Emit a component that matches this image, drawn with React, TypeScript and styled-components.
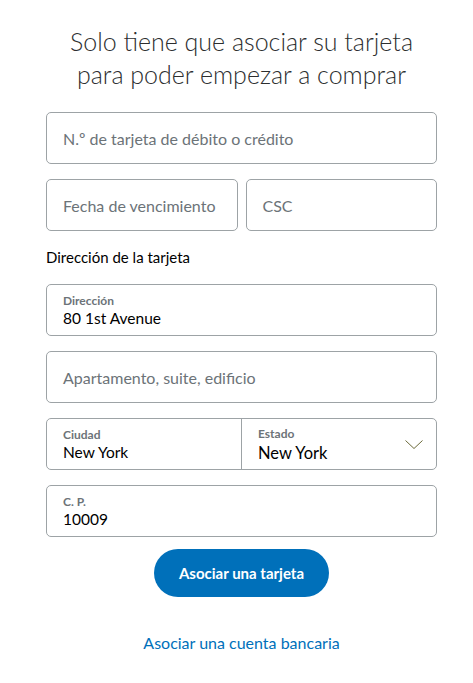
import React from "react";
import styled, { createGlobalStyle } from "styled-components";

const Global = createGlobalStyle`
  html, body { margin: 0; padding: 0; background: #fff; }
  body { font-family: Lato, "Open Sans", sans-serif; color: #2c2e2f; }
  * { box-sizing: border-box; }
`;

const Page = styled.div`
  width: 473px;
  padding: 25px 36px 0 46px;
  display: flex;
  flex-direction: column;
`;

const Title = styled.h1`
  margin: 0 0 21px;
  font-family: Lato, sans-serif;
  font-weight: 300;
  font-size: 25px;
  line-height: 33px;
  text-align: center;
  color: #2c2e2f;
`;

const Form = styled.div`
  display: flex;
  flex-direction: column;
  gap: 15px;
`;

const Row = styled.div`
  display: grid;
  grid-template-columns: 1fr 1fr;
  gap: 8px;
`;

const Box = styled.div`
  height: 52px;
  border: 1px solid #9da3a6;
  border-radius: 5px;
  display: flex;
  align-items: stretch;
  overflow: hidden;
`;

const Cell = styled.div<{ $divider?: boolean }>`
  flex: 1;
  position: relative;
  display: flex;
  flex-direction: column;
  justify-content: center;
  padding: 0 16px;
  border-left: ${(p) => (p.$divider ? "1px solid #9da3a6" : "none")};
`;

const Placeholder = styled.span`
  font-size: 16px;
  color: #6c7378;
`;

const Label = styled.span`
  font-size: 12px;
  font-weight: 700;
  color: #6c7378;
  line-height: 15px;
`;

const Value = styled.span<{ $big?: boolean }>`
  font-size: ${(p) => (p.$big ? "16.5px" : "15.5px")};
  color: #000;
  line-height: 20px;
  margin-top: ${(p) => (p.$big ? "2px" : "0")};
`;

const Section = styled.div`
  font-size: 15px;
  color: #000;
  margin: 1px 0 2px;
  line-height: 20px;
`;

const Chevron = styled.svg`
  position: absolute;
  right: 12px;
  top: 20px;
`;

const Actions = styled.div`
  display: flex;
  flex-direction: column;
  align-items: center;
  margin-top: 12px;
`;

const Button = styled.button`
  width: 175px;
  height: 48px;
  border: none;
  border-radius: 24px;
  background: #0070ba;
  color: #fff;
  font-family: Lato, sans-serif;
  font-weight: 700;
  font-size: 15px;
`;

const Link = styled.a`
  margin-top: 36px;
  color: #0070ba;
  font-size: 16px;
  line-height: 20px;
  text-decoration: none;
`;

const Field = ({ placeholder }: { placeholder: string }) => (
  <Box>
    <Cell>
      <Placeholder>{placeholder}</Placeholder>
    </Cell>
  </Box>
);

export default function App() {
  return (
    <>
      <Global />
      <Page>
        <Title>
          Solo tiene que asociar su tarjeta
          <br />
          para poder empezar a comprar
        </Title>
        <Form>
          <Field placeholder="N.º de tarjeta de débito o crédito" />
          <Row>
            <Field placeholder="Fecha de vencimiento" />
            <Field placeholder="CSC" />
          </Row>
          <Section>Dirección de la tarjeta</Section>
          <Box>
            <Cell>
              <Label>Dirección</Label>
              <Value>80 1st Avenue</Value>
            </Cell>
          </Box>
          <Field placeholder="Apartamento, suite, edificio" />
          <Box>
            <Cell>
              <Label>Ciudad</Label>
              <Value>New York</Value>
            </Cell>
            <Cell $divider>
              <Label>Estado</Label>
              <Value $big>New York</Value>
              <Chevron width="20" height="11" viewBox="0 0 20 11">
                <path d="M1.5 1.5 L10 9.5 L18.5 1.5" fill="none" stroke="#6b6a3a" strokeWidth="1" />
              </Chevron>
            </Cell>
          </Box>
          <Box>
            <Cell>
              <Label>C. P.</Label>
              <Value>10009</Value>
            </Cell>
          </Box>
        </Form>
        <Actions>
          <Button>Asociar una tarjeta</Button>
          <Link href="#">Asociar una cuenta bancaria</Link>
        </Actions>
      </Page>
    </>
  );
}
